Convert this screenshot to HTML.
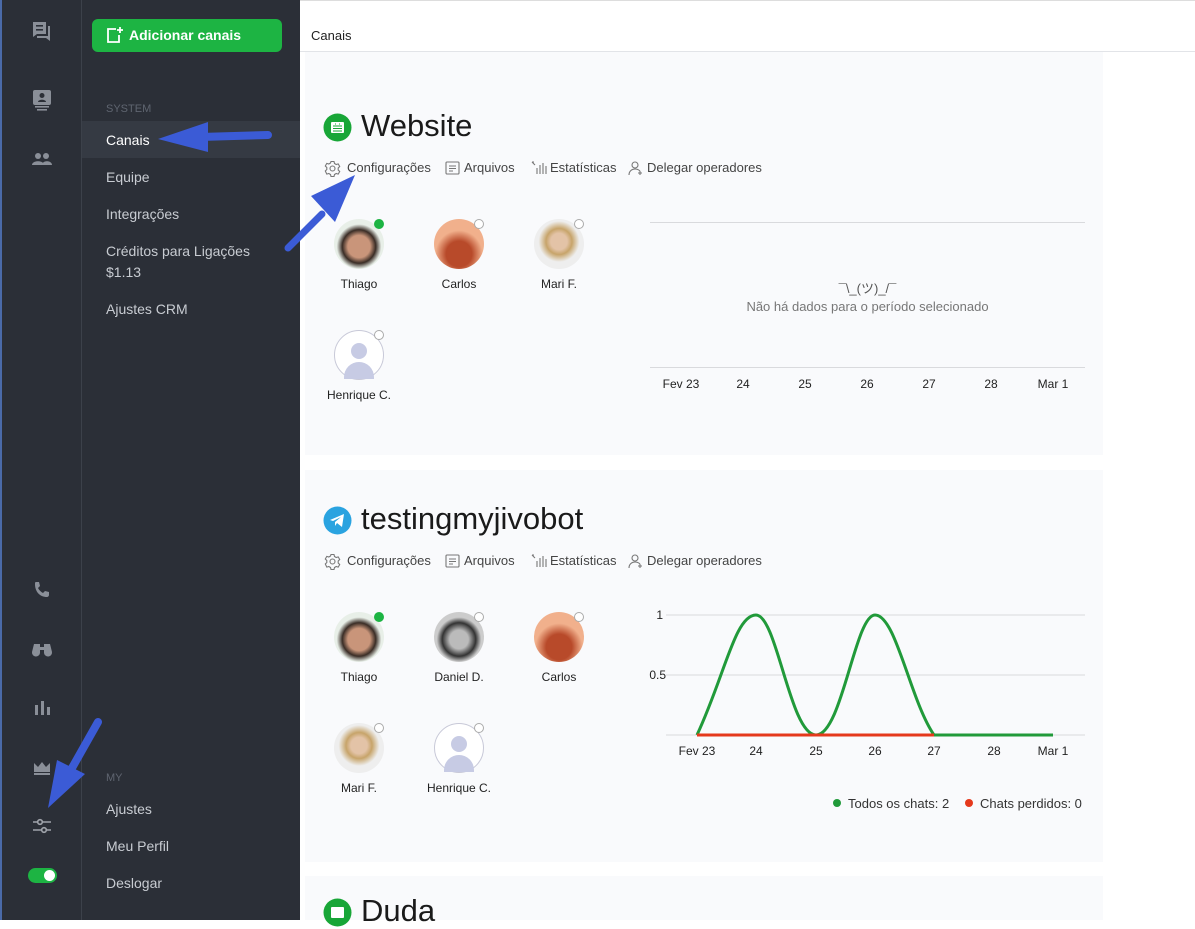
<!DOCTYPE html>
<html><head><meta charset="utf-8"><style>
*{margin:0;padding:0;box-sizing:border-box}
body{width:1195px;height:920px;overflow:hidden;background:#fff;font-family:"Liberation Sans",sans-serif;position:relative}
.rail{position:absolute;left:0;top:0;width:82px;height:920px;background:#2b2f37;border-left:2px solid #4a6aa8;border-right:1px solid #3c414a}
.side{position:absolute;left:82px;top:0;width:218px;height:920px;background:#2b2f37}
.btn{position:absolute;left:92px;top:19px;width:190px;height:33px;background:#1db443;border-radius:6px;color:#fff;font-weight:bold;font-size:14px;line-height:33px;padding-left:37px}
.lbl{position:absolute;left:106px;font-size:11px;color:#5f6570}
.it{position:absolute;left:106px;font-size:14px;color:#c8ccd2}
.sel{position:absolute;left:82px;top:121px;width:218px;height:37px;background:#353a43}
.ic{position:absolute;left:30px;fill:#8a8f98}
.top{position:absolute;left:300px;top:0;width:895px;height:52px;border-top:1px solid #ddd;border-bottom:1px solid #e2e4e8}
.top span{position:absolute;left:11px;top:27px;font-size:13px;color:#222}
.card{position:absolute;left:305px;width:798px;background:#f9fafc}
.h{position:absolute;font-size:31px;color:#1a1a1a}
.tabs{position:absolute;left:0;font-size:13px;color:#444}
.tabs span{position:absolute;white-space:nowrap;top:0}
.tabs svg{position:absolute;top:0}
.av{position:absolute;width:50px;height:50px;border-radius:50%}
.dot{position:absolute;width:10px;height:10px;border-radius:50%;border:1px solid #aaa;background:#fff}
.nm{position:absolute;font-size:12px;color:#222;width:100px;text-align:center}
.ax{position:absolute;font-size:12px;color:#222;width:60px;text-align:center}
.gl{position:absolute;height:1px;background:#d9dadd}
</style></head><body>
<div class="rail"></div>
<div class="side"></div>
<div class="sel"></div>
<svg class="ic" style="top:20px" width="24" height="24" viewBox="0 0 24 24"><path d="M3 2h13v12H7l-4 3z M18 6h2v15l-4-3H7v-2h11z"/><rect x="6" y="5" width="7" height="1.6" fill="#2b2f37"/><rect x="6" y="9" width="7" height="1.6" fill="#2b2f37"/></svg>
<svg class="ic" style="top:88px" width="24" height="24" viewBox="0 0 24 24"><rect x="3" y="2" width="18" height="15" rx="2"/><circle cx="12" cy="7.5" r="2.5" fill="#2b2f37"/><path d="M8 14c0-3 8-3 8 0z" fill="#2b2f37"/><rect x="5" y="18" width="14" height="1.6"/><rect x="7" y="21" width="10" height="1.6"/></svg>
<svg class="ic" style="top:148px" width="24" height="24" viewBox="0 0 24 24"><circle cx="8" cy="8" r="3"/><circle cx="16" cy="8" r="3"/><path d="M2 17c0-5 12-5 12 0z M12 17c0-5 10-5 10 0z"/></svg>
<svg class="ic" style="top:578px" width="24" height="24" viewBox="0 0 24 24"><path d="M6 4l3 0 1 4-2 2c1 2 3 4 5 5l2-2 4 1v3c0 1-1 2-2 2C10 19 5 14 5 6c0-1 0-2 1-2z"/></svg>
<svg class="ic" style="top:636px" width="24" height="24" viewBox="0 0 24 24"><path d="M4 8h6v3h4V8h6l2 8a4 4 0 11-8 1v-3h-4v3a4 4 0 11-8-1z"/></svg>
<svg class="ic" style="top:696px" width="24" height="24" viewBox="0 0 24 24"><rect x="5" y="9" width="3" height="10"/><rect x="11" y="5" width="3" height="14"/><rect x="17" y="11" width="3" height="8"/></svg>
<svg class="ic" style="top:756px" width="24" height="24" viewBox="0 0 24 24"><path d="M4 7l4 4 4-5 4 5 4-4v9H4z"/><rect x="4" y="17" width="16" height="2"/></svg>
<svg class="ic" style="top:814px" width="24" height="24" viewBox="0 0 24 24" fill="none" stroke="#a0a4ab" stroke-width="1.6"><path d="M3 8h18M3 16h18"/><circle cx="10" cy="8" r="2.3" fill="#2b2f37"/><circle cx="14" cy="16" r="2.3" fill="#2b2f37"/></svg>
<div style="position:absolute;left:28px;top:868px;width:29px;height:15px;border-radius:8px;background:#1db443"><div style="position:absolute;right:2px;top:2px;width:11px;height:11px;border-radius:50%;background:#fff"></div></div>
<div class="btn"><svg style="position:absolute;left:14px;top:8px" width="17" height="17" viewBox="0 0 17 17" fill="none" stroke="#fff" stroke-width="1.8"><path d="M10 2H2v13h11V8"/><path d="M14 0v6M11 3h6"/></svg>Adicionar canais</div>
<div class="lbl" style="top:103px">SYSTEM</div>
<div class="it" style="top:132px;color:#fff">Canais</div>
<div class="it" style="top:169px">Equipe</div>
<div class="it" style="top:206px">Integrações</div>
<div class="it" style="top:243px">Créditos para Ligações</div>
<div class="it" style="top:264px">$1.13</div>
<div class="it" style="top:301px">Ajustes CRM</div>
<div class="lbl" style="top:772px">MY</div>
<div class="it" style="top:801px">Ajustes</div>
<div class="it" style="top:838px">Meu Perfil</div>
<div class="it" style="top:875px">Deslogar</div>
<div class="top"><span>Canais</span></div>
<div class="card" style="top:52px;height:403px"></div>
<div class="card" style="top:470px;height:392px"></div>
<div class="card" style="top:876px;height:44px"></div>
<svg style="position:absolute;left:323px;top:113px" width="29" height="29" viewBox="0 0 29 29"><circle cx="14.5" cy="14.5" r="14" fill="#18a637"/><rect x="8" y="9" width="13" height="11" rx="1" fill="#fff"/><path d="M10 13h9M10 15.5h9M10 18h9M12 11h1M16 11h1" stroke="#18a637" stroke-width="1"/></svg>
<div class="h" style="left:361px;top:108px">Website</div>
<div class="tabs" style="top:160px">
<svg style="left:324px" width="17" height="17" viewBox="0 0 17 17" fill="none" stroke="#777" stroke-width="1.1"><circle cx="8.5" cy="8.5" r="2.5"/><path d="M7 1.5h3l.5 2 1.7 1 2-.6 1.5 2.6-1.5 1.5v2l1.5 1.5-1.5 2.6-2-.6-1.7 1-.5 2H7l-.5-2-1.7-1-2 .6L1.3 11l1.5-1.5v-2L1.3 6l1.5-2.6 2 .6 1.7-1z"/></svg><span style="left:347px">Configurações</span>
<svg style="left:445px" width="15" height="16" viewBox="0 0 15 16" fill="none" stroke="#777" stroke-width="1.1"><rect x="1" y="2" width="13" height="12" rx="1"/><path d="M4 6h7M4 8.5h7M4 11h4"/></svg><span style="left:464px">Arquivos</span>
<svg style="left:531px" width="16" height="16" viewBox="0 0 16 16" stroke="#777" stroke-width="1.1" fill="none"><path d="M1 2l3 3M1 2h2M6 8v6M9 5v9M12 3v11M15 6v8"/></svg><span style="left:550px">Estatísticas</span>
<svg style="left:628px" width="16" height="16" viewBox="0 0 16 16" stroke="#777" stroke-width="1.1" fill="none"><circle cx="7" cy="5" r="3"/><path d="M1 15c0-4 3-6 6-6s4 1 5 2M12 11v4M10 13h4"/></svg><span style="left:647px">Delegar operadores</span></div>
<div class="av" style="left:334px;top:219px;background:radial-gradient(circle at 50% 55%,#c9957a 30%,#3a2d26 45%,#e8efe8 60%)"></div><div class="dot" style="left:374px;top:219px;background:#1db443;border-color:#1db443"></div>
<div class="av" style="left:434px;top:219px;background:radial-gradient(circle at 50% 70%,#b84a2a 30%,#f1b08c 55%)"></div><div class="dot" style="left:474px;top:219px"></div>
<div class="av" style="left:534px;top:219px;background:radial-gradient(circle at 50% 45%,#e3c3a7 22%,#c7a46a 35%,#eeeeee 55%),#eee"></div><div class="dot" style="left:574px;top:219px"></div>
<div class="nm" style="left:309px;top:277px">Thiago</div><div class="nm" style="left:409px;top:277px">Carlos</div><div class="nm" style="left:509px;top:277px">Mari F.</div>
<div class="av" style="left:334px;top:330px;border:1px solid #c8c9d8;background:#fff"><div style="position:absolute;left:16px;top:12px;width:16px;height:16px;border-radius:50%;background:#c7cbe4"></div><div style="position:absolute;left:9px;top:31px;width:30px;height:17px;border-radius:15px 15px 0 0;background:#c7cbe4"></div></div><div class="dot" style="left:374px;top:330px"></div>
<div class="nm" style="left:309px;top:388px">Henrique C.</div>
<div class="gl" style="left:650px;top:222px;width:435px"></div>
<div class="gl" style="left:650px;top:367px;width:435px"></div>
<div style="position:absolute;left:650px;top:278px;width:435px;text-align:center;font-size:13px;color:#555">¯\_(ツ)_/¯</div>
<div style="position:absolute;left:650px;top:299px;width:435px;text-align:center;font-size:13px;color:#777">Não há dados para o período selecionado</div>
<div class="ax" style="left:651px;top:377px">Fev 23</div><div class="ax" style="left:713px;top:377px">24</div><div class="ax" style="left:775px;top:377px">25</div><div class="ax" style="left:837px;top:377px">26</div><div class="ax" style="left:899px;top:377px">27</div><div class="ax" style="left:961px;top:377px">28</div><div class="ax" style="left:1023px;top:377px">Mar 1</div>
<svg style="position:absolute;left:323px;top:506px" width="29" height="29" viewBox="0 0 29 29"><circle cx="14.5" cy="14.5" r="14" fill="#2aa3e0"/><path d="M7 14l14-6-2 13-5-4-2 3v-4l6-5-8 4z" fill="#fff"/></svg>
<div class="h" style="left:361px;top:501px">testingmyjivobot</div>
<div class="tabs" style="top:553px">
<svg style="left:324px" width="17" height="17" viewBox="0 0 17 17" fill="none" stroke="#777" stroke-width="1.1"><circle cx="8.5" cy="8.5" r="2.5"/><path d="M7 1.5h3l.5 2 1.7 1 2-.6 1.5 2.6-1.5 1.5v2l1.5 1.5-1.5 2.6-2-.6-1.7 1-.5 2H7l-.5-2-1.7-1-2 .6L1.3 11l1.5-1.5v-2L1.3 6l1.5-2.6 2 .6 1.7-1z"/></svg><span style="left:347px">Configurações</span>
<svg style="left:445px" width="15" height="16" viewBox="0 0 15 16" fill="none" stroke="#777" stroke-width="1.1"><rect x="1" y="2" width="13" height="12" rx="1"/><path d="M4 6h7M4 8.5h7M4 11h4"/></svg><span style="left:464px">Arquivos</span>
<svg style="left:531px" width="16" height="16" viewBox="0 0 16 16" stroke="#777" stroke-width="1.1" fill="none"><path d="M1 2l3 3M1 2h2M6 8v6M9 5v9M12 3v11M15 6v8"/></svg><span style="left:550px">Estatísticas</span>
<svg style="left:628px" width="16" height="16" viewBox="0 0 16 16" stroke="#777" stroke-width="1.1" fill="none"><circle cx="7" cy="5" r="3"/><path d="M1 15c0-4 3-6 6-6s4 1 5 2M12 11v4M10 13h4"/></svg><span style="left:647px">Delegar operadores</span></div>
<div class="av" style="left:334px;top:612px;background:radial-gradient(circle at 50% 55%,#c9957a 30%,#3a2d26 45%,#e8efe8 60%)"></div><div class="dot" style="left:374px;top:612px;background:#1db443;border-color:#1db443"></div>
<div class="av" style="left:434px;top:612px;background:radial-gradient(circle at 50% 55%,#bbb 25%,#333 45%,#ccc 60%)"></div><div class="dot" style="left:474px;top:612px"></div>
<div class="av" style="left:534px;top:612px;background:radial-gradient(circle at 50% 70%,#b84a2a 30%,#f1b08c 55%)"></div><div class="dot" style="left:574px;top:612px"></div>
<div class="nm" style="left:309px;top:670px">Thiago</div><div class="nm" style="left:409px;top:670px">Daniel D.</div><div class="nm" style="left:509px;top:670px">Carlos</div>
<div class="av" style="left:334px;top:723px;background:radial-gradient(circle at 50% 45%,#e3c3a7 22%,#c7a46a 35%,#eeeeee 55%),#eee"></div><div class="dot" style="left:374px;top:723px"></div>
<div class="av" style="left:434px;top:723px;border:1px solid #c8c9d8;background:#fff"><div style="position:absolute;left:16px;top:12px;width:16px;height:16px;border-radius:50%;background:#c7cbe4"></div><div style="position:absolute;left:9px;top:31px;width:30px;height:17px;border-radius:15px 15px 0 0;background:#c7cbe4"></div></div><div class="dot" style="left:474px;top:723px"></div>
<div class="nm" style="left:309px;top:781px">Mari F.</div><div class="nm" style="left:409px;top:781px">Henrique C.</div>
<svg style="position:absolute;left:620px;top:600px" width="480" height="220" viewBox="620 600 480 220">
<path d="M666 615H1085M666 675H1085M666 735H1085" stroke="#d9dadd"/>
<path d="M697 735C725 675 735 615 756 615C777 615 790 735 816 735C842 735 855 615 875 615C896 615 910 700 934 735H1053" fill="none" stroke="#219a3a" stroke-width="3"/>
<path d="M697 735H934" stroke="#e5391c" stroke-width="3"/>
<g font-family="Liberation Sans" font-size="12" fill="#222" text-anchor="middle"><text x="697" y="755">Fev 23</text><text x="756" y="755">24</text><text x="816" y="755">25</text><text x="875" y="755">26</text><text x="934" y="755">27</text><text x="994" y="755">28</text><text x="1053" y="755">Mar 1</text><text x="663" y="619" text-anchor="end">1</text><text x="666" y="679" text-anchor="end">0.5</text></g>
<circle cx="837" cy="803" r="4" fill="#219a3a"/><circle cx="969" cy="803" r="4" fill="#e5391c"/>
<g font-family="Liberation Sans" font-size="13" fill="#333"><text x="848" y="808">Todos os chats: 2</text><text x="980" y="808">Chats perdidos: 0</text></g>
</svg>
<svg style="position:absolute;left:323px;top:898px" width="29" height="29" viewBox="0 0 29 29"><circle cx="14.5" cy="14.5" r="14" fill="#18a637"/><rect x="8" y="9" width="13" height="11" rx="1" fill="#fff"/></svg>
<div class="h" style="left:361px;top:893px">Duda</div>
<svg style="position:absolute;left:0;top:0" width="1195" height="920" fill="#3b5bd6" stroke="#3b5bd6">
<path d="M268 135L200 137" stroke-width="8" stroke-linecap="round"/><polygon points="158,139 208,122 208,152" stroke="none"/>
<path d="M288 248L322 214" stroke-width="7" stroke-linecap="round"/><polygon points="355,175 311,196 335,222" stroke="none"/>
<path d="M98 722L72 768" stroke-width="8" stroke-linecap="round"/><polygon points="48,808 57,760 85,774" stroke="none"/>
</svg>
</body></html>
